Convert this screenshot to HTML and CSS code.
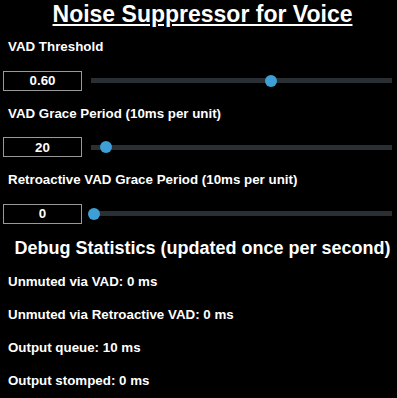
FILE: index.html
```html
<!DOCTYPE html>
<html lang="en">
<head>
  <meta charset="UTF-8">
  <meta name="viewport" content="width=device-width, initial-scale=1.0">
  <title>Noise Suppressor for Voice</title>
  <link rel="stylesheet" href="styles.css">
</head>
<body>
  <h1 class="title">Noise Suppressor for Voice</h1>

  <div class="field">
    <label for="vad-threshold">VAD Threshold</label>
    <div class="control-row">
      <input type="text" class="value-box" id="vad-threshold-value" value="0.60">
      <input type="range" class="slider" id="vad-threshold" min="0" max="1" step="0.01" value="0.6">
    </div>
  </div>

  <div class="field">
    <label for="vad-grace">VAD Grace Period (10ms per unit)</label>
    <div class="control-row">
      <input type="text" class="value-box" id="vad-grace-value" value="20">
      <input type="range" class="slider" id="vad-grace" min="0" max="500" step="1" value="20">
    </div>
  </div>

  <div class="field">
    <label for="retro-grace">Retroactive VAD Grace Period (10ms per unit)</label>
    <div class="control-row">
      <input type="text" class="value-box" id="retro-grace-value" value="0">
      <input type="range" class="slider" id="retro-grace" min="0" max="500" step="1" value="0">
    </div>
  </div>

  <h2 class="stats-title">Debug Statistics (updated once per second)</h2>
  <div class="stats">
    <p>Unmuted via VAD: <span id="unmuted-vad">0</span> ms</p>
    <p>Unmuted via Retroactive VAD: <span id="unmuted-retro">0</span> ms</p>
    <p>Output queue: <span id="output-queue">10</span> ms</p>
    <p>Output stomped: <span id="output-stomped">0</span> ms</p>
  </div>
</body>
</html>
```

FILE: styles.css
```css
body {
  margin: 0;
  padding: 0;
  background-color: #000;
  color: #fff;
  font-family: "Liberation Sans", Arial, sans-serif;
  font-weight: bold;
}

.title {
  margin: 0;
  padding-left: 8px;
  font-size: 23px;
  line-height: 28px;
  text-align: center;
  text-decoration: underline;
}

.field label {
  display: block;
  padding-left: 8px;
  font-size: 13.33px;
  line-height: 16px;
}

.field:first-of-type {
  margin-top: 11.4px;
}

.control-row {
  display: flex;
  align-items: center;
  gap: 6px;
  height: 20px;
  margin: 15.3px 2px 15.2px 3px;
}

.value-box {
  box-sizing: border-box;
  width: 79px;
  height: 20px;
  margin: 0;
  padding: 0;
  border: 1px solid #9a9a9a;
  background-color: #000;
  color: #fff;
  font-family: inherit;
  font-weight: bold;
  font-size: 13.33px;
  text-align: center;
  outline: none;
}

.slider {
  -webkit-appearance: none;
  appearance: none;
  flex: 1;
  height: 12px;
  margin: 0;
  background: linear-gradient(#2a2f33, #2a2f33) center / calc(100% - 6px) 5px no-repeat;
  cursor: pointer;
}

.slider::-webkit-slider-runnable-track {
  height: 12px;
  background: transparent;
}

.slider::-webkit-slider-thumb {
  -webkit-appearance: none;
  width: 12px;
  height: 12px;
  border-radius: 50%;
  background-color: #3d9fd5;
  border: none;
}

.stats-title {
  margin: -1.7px 0 0;
  padding-left: 8px;
  font-size: 18px;
  line-height: 22px;
  text-align: center;
}

.stats {
  margin-top: 14.6px;
  padding-left: 8px;
}

.stats p {
  margin: 0 0 17px;
  font-size: 13.33px;
  line-height: 16px;
}
```
